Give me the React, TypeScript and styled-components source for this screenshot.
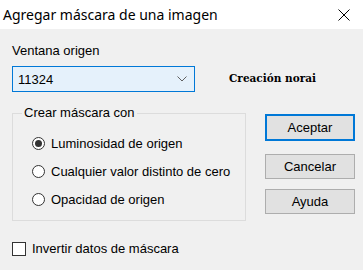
import React from 'react';
import styled, { createGlobalStyle } from 'styled-components';

const GlobalStyle = createGlobalStyle`
  html, body {
    margin: 0;
    padding: 0;
    background: #f0f0f0;
  }
`;

const Window = styled.div`
  width: 363px;
  height: 270px;
  background: #f0f0f0;
  font-family: 'Liberation Sans', Arial, sans-serif;
  font-size: 13px;
  color: #000;
  display: flex;
  flex-direction: column;
  overflow: hidden;
`;

const TitleBar = styled.div`
  height: 29px;
  background: #fff;
  display: flex;
  align-items: center;
  justify-content: space-between;
  padding: 0 13px 0 3px;
  box-sizing: border-box;
`;

const Title = styled.span`
  font-family: 'Noto Sans', 'Open Sans', sans-serif;
  font-size: 14px;
  color: #000;
  margin-top: -1px;
`;

const Body = styled.div`
  flex: 1;
  display: flex;
  padding: 15px 9px 0 12px;
`;

const MainColumn = styled.div`
  width: 234px;
  display: flex;
  flex-direction: column;
`;

const Label = styled.div`
  line-height: 14px;
  height: 14px;
`;

const ComboRow = styled.div`
  display: flex;
  align-items: center;
  margin-top: 8px;
  width: 320px;
`;

const Combo = styled.div`
  width: 183px;
  height: 26px;
  box-sizing: border-box;
  border: 1px solid #0078d7;
  background: #e5f1fb;
  display: flex;
  align-items: center;
  justify-content: space-between;
  padding: 0 7px 0 5px;
`;

const Signature = styled.span`
  font-family: 'DejaVu Serif', 'Liberation Serif', serif;
  font-weight: bold;
  font-size: 10.5px;
  margin-left: 34px;
  margin-top: -2px;
`;

const GroupBox = styled.fieldset`
  margin: 14px 0 0 0;
  padding: 9px 0 0 19px;
  border: 1px solid #dcdcdc;
  height: 115px;
  box-sizing: border-box;
  min-width: 0;
`;

const Legend = styled.legend`
  padding: 0 2px;
  margin-left: -10px;
  line-height: 14px;
`;

const RadioRow = styled.label`
  display: flex;
  align-items: center;
  height: 28px;
  gap: 6px;
`;

const RadioCircle = styled.span<{ $checked?: boolean }>`
  width: 13px;
  height: 13px;
  box-sizing: border-box;
  border-radius: 50%;
  border: 1px solid #333;
  background: #fff;
  display: flex;
  align-items: center;
  justify-content: center;
  &::after {
    content: '';
    width: 7px;
    height: 7px;
    border-radius: 50%;
    background: ${(p) => (p.$checked ? '#333' : 'transparent')};
  }
`;

const CheckRow = styled.label`
  display: flex;
  align-items: center;
  gap: 6px;
  margin-top: 20px;
`;

const CheckBox = styled.span`
  width: 14px;
  height: 14px;
  box-sizing: border-box;
  border: 1px solid #333;
  background: #fff;
`;

const ButtonColumn = styled.div`
  display: flex;
  flex-direction: column;
  margin-top: 70px;
  margin-left: 19px;
`;

const Button = styled.button<{ $default?: boolean }>`
  width: 90px;
  height: ${(p) => (p.$default ? 27 : 25)}px;
  box-sizing: border-box;
  background: #e1e1e1;
  border: ${(p) => (p.$default ? '2px solid #0078d7' : '1px solid #adadad')};
  font-family: 'Liberation Sans', Arial, sans-serif;
  font-size: 13px;
  color: #000;
  padding: 0;
  margin-bottom: ${(p) => (p.$default ? 13 : 10)}px;
`;

const Chevron = () => (
  <svg width="10" height="6" viewBox="0 0 10 6">
    <path d="M0.5 0.5 L5 5 L9.5 0.5" fill="none" stroke="#606060" strokeWidth="1" />
  </svg>
);

const CloseIcon = () => (
  <svg width="12" height="12" viewBox="0 0 12 12">
    <path d="M0.5 0.5 L11.5 11.5 M11.5 0.5 L0.5 11.5" stroke="#000" strokeWidth="1" />
  </svg>
);

const options = [
  { label: 'Luminosidad de origen', checked: true },
  { label: 'Cualquier valor distinto de cero', checked: false },
  { label: 'Opacidad de origen', checked: false },
];

export default function App() {
  return (
    <Window>
      <GlobalStyle />
      <TitleBar>
        <Title>Agregar máscara de una imagen</Title>
        <CloseIcon />
      </TitleBar>
      <Body>
        <MainColumn>
          <Label>Ventana origen</Label>
          <ComboRow>
            <Combo>
              <span>11324</span>
              <Chevron />
            </Combo>
            <Signature>Creación norai</Signature>
          </ComboRow>
          <GroupBox>
            <Legend>Crear máscara con</Legend>
            {options.map((o) => (
              <RadioRow key={o.label}>
                <RadioCircle $checked={o.checked} />
                {o.label}
              </RadioRow>
            ))}
          </GroupBox>
          <CheckRow>
            <CheckBox />
            Invertir datos de máscara
          </CheckRow>
        </MainColumn>
        <ButtonColumn>
          <Button $default>Aceptar</Button>
          <Button>Cancelar</Button>
          <Button>Ayuda</Button>
        </ButtonColumn>
      </Body>
    </Window>
  );
}
